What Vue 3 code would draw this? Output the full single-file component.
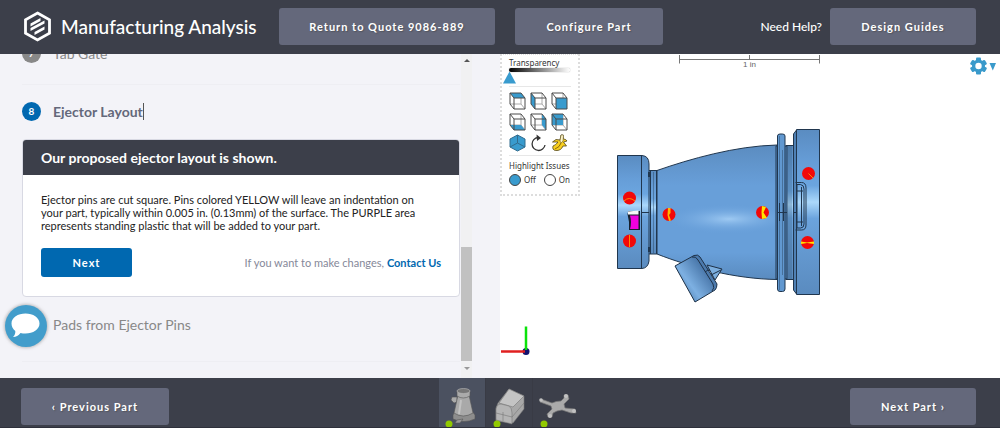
<script setup>
import { ref } from 'vue'

const transparency = ref(0)
const highlight = ref('off')
const activePart = ref('nozzle')

const cubes = [
  { name: 'Top view', face: '1,1 12,1 16,6 5,6' },
  { name: 'Left view', face: '1,1 5,6 5,17 1,12' },
  { name: 'Front view', face: '5,6 16,6 16,17 5,17' },
  { name: 'Bottom view', face: '1,12 12,12 16,17 5,17' },
  { name: 'Right view', face: '12,1 16,6 16,17 12,12' },
  { name: 'Back view', face: '1,1 12,1 12,12 1,12' },
]
</script>

<template>
  <div class="app">
    <header class="topbar">
      <svg class="logo" viewBox="0 0 28 31" aria-hidden="true">
        <path d="M14 2 26 8.700V22.300L14 29 2 22.300V8.700Z" fill="none" stroke="#fff" stroke-width="2.800" />
        <path d="M7 15.500V12.500L17 7V10ZM7 20V17L21 9.500V12.500ZM11 24V21L21 15.500V18.500Z" fill="#fff" />
      </svg>
      <h1>Manufacturing Analysis</h1>
      <button class="btn quote" type="button">Return to Quote 9086-889</button>
      <button class="btn configure" type="button">Configure Part</button>
      <span class="help">Need Help?</span>
      <button class="btn guides" type="button">Design Guides</button>
    </header>

    <main>
      <section class="steps">
        <div class="step-list">
          <div class="step past"><span class="num">7</span><span>Tab Gate</span></div>
          <hr />
          <div class="step current"><span class="num">8</span><span class="name">Ejector Layout</span></div>
          <article class="card">
            <h2>Our proposed ejector layout is shown.</h2>
            <div class="card-body">
              <p>Ejector pins are cut square. Pins colored YELLOW will leave an indentation on your part, typically within 0.005 in. (0.13mm) of the surface. The PURPLE area represents standing plastic that will be added to your part.</p>
              <div class="actions">
                <button class="next" type="button">Next</button>
                <span>If you want to make changes, <a href="#contact">Contact Us</a></span>
              </div>
            </div>
          </article>
          <div class="step upcoming"><span class="num"></span><span>Pads from Ejector Pins</span></div>
          <hr />
        </div>
        <div class="scrollbar" aria-hidden="true">
          <i class="arrow up"></i>
          <div class="thumb"></div>
          <i class="arrow down"></i>
        </div>
        <button class="chat" type="button" aria-label="Chat">
          <svg viewBox="0 0 42 42">
            <path d="M20.500 8.500C28 8.500 34.500 12.500 34.500 18.500S28 28.500 20.500 28.500C18.800 28.500 17 28.300 15.500 27.900C13.500 30.500 11 31.800 8 32C9.800 30.300 10.500 28.500 10.300 26C8 24.200 6.500 21.500 6.500 18.500C6.500 12.500 13 8.500 20.500 8.500Z" fill="#fff" />
          </svg>
        </button>
      </section>

      <section class="viewer">
        <svg class="scene" viewBox="500 54 500 324" preserveAspectRatio="xMidYMin meet">
          <defs>
            <linearGradient id="steel" x1="0" y1="0" x2="0" y2="1">
              <stop offset="0" stop-color="#5a8cc1" />
              <stop offset=".2" stop-color="#669dd7" />
              <stop offset=".34" stop-color="#6ba5df" />
              <stop offset=".44" stop-color="#abd8fb" />
              <stop offset=".54" stop-color="#6ba3dd" />
              <stop offset="1" stop-color="#5a8bbf" />
            </linearGradient>
            <linearGradient id="body" x1="0" y1="0" x2="0" y2="1">
              <stop offset="0" stop-color="#5b8cc0" />
              <stop offset=".3" stop-color="#689fd9" />
              <stop offset=".8" stop-color="#689fd9" />
              <stop offset="1" stop-color="#5a8bbf" />
            </linearGradient>
            <radialGradient id="shine">
              <stop offset="0" stop-color="#a4cef5" stop-opacity=".9" />
              <stop offset="1" stop-color="#68a0dc" stop-opacity="0" />
            </radialGradient>
            <linearGradient id="spout" x1="680" y1="292" x2="706" y2="273" gradientUnits="userSpaceOnUse">
              <stop offset="0" stop-color="#4f80b3" />
              <stop offset=".4" stop-color="#7db0e2" />
              <stop offset="1" stop-color="#4c7aad" />
            </linearGradient>
          </defs>

          <path d="M679.500 55V63.500M819.500 55V63.500M679.500 59.500H819.500M749.500 55V59.500" stroke="#777" fill="none" />
          <text x="743" y="67" class="scale-text">1 in</text>

          <g stroke="#20364e" stroke-width="1">
            <path d="M648 170.500H657V254H648Z" fill="url(#steel)" />
            <path d="M617.500 155.500H642Q649 156 649 164V261Q648 268 642 268.500H617.500Z" fill="url(#steel)" />
            <path d="M657 170.500C690 159 735 146 777 145V279.500C735 279 690 267 657 254Z" fill="url(#body)" />
          </g>
          <ellipse cx="729" cy="219" rx="66" ry="15" fill="url(#shine)" />
          <g stroke="#20364e" stroke-width="1">
            <path d="M786 145.500H795V279.500H786Z" fill="url(#steel)" />
            <path d="M796.500 130 793.500 134V290L796.500 294Z" fill="#4f80b4" />
            <path d="M796.500 129.500H819.500V294.500H796.500Z" fill="url(#steel)" />
            <path d="M776 146H787V279H776Z" fill="#568bc2" />
            <path d="M777.500 136Q777.500 134 780 134H782.500Q785 134 785 136V289Q785 291.500 782.500 291.500H780Q777.500 291.500 777.500 289Z" fill="#6198d0" />
          </g>
          <g fill="none" stroke="#20364e" stroke-width="1">
            <path d="M641.500 156V268M641 212.500H649M650.500 171V254M656.500 171V254" />
            <path d="M653.500 172V253M779.500 136V290M782.500 150V275M789 146V279M791 146V279" stroke-opacity=".4" />
            <path d="M649 172V177M649 247V252" stroke-width="2" />
            <path d="M777 212.500H787M793 212.500H797M779.500 203V221M783.500 203V221" />
            <path d="M795.500 182.500H801.500Q806 182.500 806 188V225Q806 230 801.500 230H795.500M797 184.500H800.500Q804 185 804 189V224Q804 228 800.500 228H797Z" />
            <path d="M796.500 187V226M801.500 187V226M797 191H803M797 222H803" />
          </g>
          <g stroke="#1e3147" stroke-width="1" stroke-linejoin="round">
            <path d="M707 265 722 269 715 280Z" fill="#7caede" />
            <path d="M711 275 721 270" fill="none" />
            <path d="M675 266 694 255.500Q698 254 700 257L717 284Q717 288 715 290L695 302Z" fill="url(#spout)" />
            <path d="M692 257Q696 256 698 260L713 284Q715 288 712 291M705 272 708 270" fill="none" />
          </g>

          <path d="M628.500 211H640V230H629V222L627.500 214Z" fill="#17202d" />
          <path d="M628 211.500 638.500 210.500V214.500H628Z" fill="#f7f7f7" />
          <path d="M630 215.500H638.500V229H630Q632 222 630 215.500Z" fill="#f000dd" />

          <g fill="#f20808">
            <circle cx="629.500" cy="198" r="6.500" />
            <circle cx="629.500" cy="241" r="6.500" />
            <circle cx="669" cy="214.500" r="6.500" />
            <circle cx="762.500" cy="212.500" r="6.500" />
            <circle cx="808.500" cy="173.500" r="6.500" />
            <circle cx="807.500" cy="242.500" r="6.500" />
          </g>
          <path d="M624 201Q629 196 635 201M629.500 235V247M808.500 173.500 813 178" fill="none" stroke="#ff8a00" />
          <path d="M668 208H670.500V213L669 215 671 220.500 669 221 667.500 215Z" fill="#ffb900" />
          <path d="M762 206 766 207 763.500 212.500 767 218 762 219 761.500 212.500Z" fill="#ffe400" />
          <path d="M801 241.500 807 242.500 814 241.500V244L807 243 801 244Z" fill="#ffe400" />

          <circle cx="526" cy="351.500" r="3.500" fill="#11116e" />
          <path d="M501 351.500H525" stroke="#e02020" stroke-width="2.500" />
          <path d="M526 326.500V350" stroke="#0be20b" stroke-width="2.500" />
        </svg>

        <form class="tools" @submit.prevent>
          <label for="transparency">Transparency</label>
          <input id="transparency" v-model="transparency" type="range" min="0" max="100" />
          <div class="views">
            <button v-for="cube in cubes" :key="cube.name" type="button" :aria-label="cube.name">
              <svg viewBox="0 0 17 18">
                <path d="M1 12H12V1M12 12 16 17" fill="none" stroke="#aaa" />
                <polygon :points="cube.face" fill="#399bce" />
                <path d="M1 1H12L16 6V17H5L1 12ZM1 1 5 6H16M5 6V17" fill="none" stroke="#4b4b4b" stroke-width="1" />
              </svg>
            </button>
            <button type="button" aria-label="Isometric view">
              <svg viewBox="0 0 17 18">
                <path d="M8.500 1 16 5V13L8.500 17 1 13V5Z" fill="#399bce" stroke="#326c8e" />
                <path d="M8.500 1V9L1 13M8.500 9 16 13" fill="none" stroke="#326c8e" />
              </svg>
            </button>
            <button type="button" aria-label="Rotate">
              <svg viewBox="0 0 17 18">
                <path d="M8 3.500A6.500 6.500 0 1 0 15 11" fill="none" stroke="#333" stroke-width="1.300" />
                <path d="M6.500 .5 11 4 7 7Z" fill="#333" />
              </svg>
            </button>
            <button type="button" aria-label="Banana for scale">
              <svg viewBox="0 0 17 18">
                <path d="M10 1 12 1 12.500 5Q15 5 16 7L12.500 8 15.500 12 12 12Q10 17 4.500 16.500Q1 16 2 12Q5 11 7 8L1.500 8 5 5.500 9 6Z" fill="#f8cf20" stroke="#51451a" stroke-width=".8" />
                <path d="M10 1H12.500L12 7 10 9 9 7Z" fill="#fff6c8" stroke="#51451a" stroke-width=".5" />
                <path d="M4 15Q9 13 10 9" fill="none" stroke="#8a6a0b" />
              </svg>
            </button>
          </div>
          <fieldset>
            <legend>Highlight Issues</legend>
            <label><input v-model="highlight" type="radio" name="highlight" value="off" />Off</label>
            <label><input v-model="highlight" type="radio" name="highlight" value="on" />On</label>
          </fieldset>
        </form>

        <button class="settings" type="button" aria-label="Viewer settings">
          <svg viewBox="0 0 27 18">
            <g fill="#3a9acb">
              <rect v-for="a in [0, 60, 120]" :key="a" x="6" y="0.500" width="5" height="17" rx="1" :transform="`rotate(${a} 8.500 9)`" />
              <circle cx="8.500" cy="9" r="6.500" />
              <path d="M19.500 6H26L22.800 13.500Z" />
            </g>
            <circle cx="8.500" cy="9" r="3.200" fill="#fff" />
          </svg>
        </button>
      </section>
    </main>

    <footer>
      <button class="btn previous" type="button">‹ Previous Part</button>
      <nav class="parts" aria-label="Parts">
        <button type="button" aria-label="Nozzle" :class="{ active: activePart === 'nozzle' }" @click="activePart = 'nozzle'">
          <svg viewBox="0 0 47 49">
            <g stroke="#555" stroke-width=".6">
              <path d="M14 37 16 33H33L36 37V41Q25 46 14 41Z" fill="#8d8d8d" />
              <path d="M18 19 13 19 12 22 15 25 18 24Z" fill="#aaa" />
              <path d="M19 17 15 35Q24 41 34 35L30 17Z" fill="#a9a9a9" />
              <path d="M18 13V18Q24 22 31 18V13Z" fill="#aaa" />
              <ellipse cx="24.500" cy="13" rx="6.500" ry="2.500" fill="#777" stroke="#bbb" />
              <path d="M18 42 24 41 21 45 16 45Z" fill="#999" />
            </g>
            <path d="M22 22 20 36" stroke="#c2c2c2" stroke-width="2" />
            <circle cx="10" cy="46" r="3.500" fill="#91c900" />
          </svg>
        </button>
        <button type="button" aria-label="Cover" :class="{ active: activePart === 'cover' }" @click="activePart = 'cover'">
          <svg viewBox="0 0 47 49">
            <g stroke="#777" stroke-width=".6">
              <path d="M10 30 12 25 23 11 38 18V31L27 45 10 43Z" fill="#a8a8a8" />
              <path d="M13 25 23 11 38 18 27 29Z" fill="#c4c4c4" />
              <path d="M10 31Q11 26 15 26L23 28Q26 30 26 35V46L10 42Z" fill="#b5b5b5" />
              <path d="M10 35 26 39 38 25M17 34V43" fill="none" />
            </g>
            <circle cx="11" cy="46" r="3.500" fill="#91c900" />
          </svg>
        </button>
        <button type="button" aria-label="Frame" :class="{ active: activePart === 'frame' }" @click="activePart = 'frame'">
          <svg viewBox="0 0 47 49">
            <path d="M8 21 19 25Q23 23 28 23L31 20 31 17 35 17 36 21 31 26 32 30 42 31 43 35 38 35 29 32 24 33 20 35 19 39 15 39 14 36 19 31 18 28 7 24Z" fill="#aaa" stroke="#777" stroke-width=".7" />
            <g fill="#c2c2c2"><circle cx="8" cy="22" r="1.800" /><circle cx="33" cy="18" r="2" /><circle cx="41" cy="33" r="2" /><circle cx="17" cy="38" r="2" /></g>
            <circle cx="11" cy="46" r="3.500" fill="#91c900" />
          </svg>
        </button>
      </nav>
      <button class="btn following" type="button">Next Part ›</button>
    </footer>
  </div>
</template>

<style>
body {
  margin: 0;
}
</style>

<style scoped>
.app {
  display: flex;
  flex-direction: column;
  height: 100vh;
  font-family: "Lato", "Liberation Sans", sans-serif;
  color: #222;
  overflow: hidden;
}
button {
  border: 0;
  padding: 0;
  font: inherit;
  background: none;
  cursor: pointer;
}
svg {
  display: block;
}
.topbar {
  display: flex;
  flex: none;
  align-items: center;
  height: 54px;
  padding: 0 24px 2px 23px;
  box-sizing: border-box;
  background: #3c3f4a;
  color: #fff;
}
.logo {
  width: 29px;
  height: 31px;
  margin-right: 9px;
}
h1 {
  margin: 0;
  width: 218px;
  font-size: 19px;
  font-weight: 500;
  white-space: nowrap;
}
.btn {
  height: 37px;
  border-radius: 3px;
  background: #64687b;
  color: #fff;
  font-size: 11px;
  font-weight: 700;
  letter-spacing: 1px;
  white-space: nowrap;
  text-shadow: 1px 1px 1px #4448;
}
.quote {
  width: 216px;
}
.configure {
  width: 148px;
  margin-left: 20px;
}
.guides {
  width: 146px;
}
.help {
  margin: 0 8px 0 auto;
  font-size: 12px;
  font-weight: 500;
}
main {
  flex: 1;
  min-height: 0;
  display: grid;
  grid-template-columns: minmax(0, 1fr) minmax(0, 1fr);
}
.steps {
  position: relative;
  display: flex;
  min-height: 0;
  padding: 0 28px 0 22px;
  background: #f3f3f8;
}
.step-list {
  flex: 1;
  min-width: 0;
  display: flex;
  flex-direction: column;
  justify-content: flex-end;
  padding-bottom: 16px;
  overflow: hidden;
}
.step-list > * {
  flex: none;
}
.step {
  display: flex;
  align-items: center;
  gap: 12px;
  height: 58px;
  font-size: 14px;
  color: #888;
}
.num {
  width: 19px;
  height: 19px;
  border-radius: 50%;
  background: #888;
  color: #fff;
  font-size: 10px;
  font-weight: 700;
  line-height: 19px;
  text-align: center;
}
.current {
  height: 54px;
  padding-bottom: 2px;
  box-sizing: border-box;
  color: #64687b;
  font-weight: 700;
}
.current .num {
  background: #0068b0;
}
.name {
  border-right: 1px solid #555;
}
.upcoming {
  height: 54px;
  margin-bottom: 8px;
}
hr {
  width: 100%;
  margin: 2px 0 0;
  border: 0;
  border-top: 1px solid #eeeef3;
}
.card {
  box-sizing: border-box;
  border: 1px solid #d8d9e3;
  border-radius: 4px;
  background: #fff;
  overflow: hidden;
}
h2 {
  margin: 0;
  padding: 0 18px;
  background: #3c3f4a;
  color: #fff;
  font-size: 14px;
  font-weight: 700;
  line-height: 35px;
}
.card-body {
  padding: 18px 18px 19px;
}
p {
  margin: 0;
  padding-right: 12px;
  font-size: 11px;
  line-height: 13px;
}
.actions {
  display: flex;
  align-items: center;
  justify-content: space-between;
  margin-top: 16px;
  color: #858899;
  font-size: 11px;
}
.next {
  width: 91px;
  height: 29px;
  border-radius: 3px;
  background: #0068b0;
  color: #fff;
  font-weight: 700;
  letter-spacing: 1px;
}
a {
  color: #0068b0;
  font-weight: 700;
  text-decoration: none;
}
.scrollbar {
  display: flex;
  flex-direction: column;
  align-items: center;
  width: 11px;
  margin-left: 1px;
  padding: 5px 0 8px;
  background: #f1f1f2;
}
.thumb {
  width: 11px;
  height: 114px;
  margin: auto 0 6px;
  background: #c1c1c1;
}
.arrow {
  border: 3px solid transparent;
}
.up {
  border-top: 0;
  border-bottom-color: #555;
}
.down {
  border-bottom: 0;
  border-top-color: #999;
}
.chat {
  position: absolute;
  left: 5px;
  bottom: 31px;
  width: 42px;
  height: 42px;
  border-radius: 50%;
  background: #429dcb;
  box-shadow: 0 0 3px 1px #8888;
}
.viewer {
  position: relative;
  min-height: 0;
  background: #fff;
}
.scene {
  width: 100%;
  height: 100%;
}
.scale-text {
  font: 8px "Liberation Sans", sans-serif;
  fill: #666;
}
.tools {
  position: absolute;
  top: 0;
  left: 0;
  box-sizing: border-box;
  width: 80px;
  padding: 2px 7px 8px;
  border: 2px dotted #ddd;
  border-top-width: 1px;
  background: #fff;
  font: 8px/12px "Noto Sans", sans-serif;
  color: #333;
}
.tools > label {
  display: block;
}
input[type="range"] {
  display: block;
  appearance: none;
  width: 61px;
  height: 4px;
  margin: -1px 0 14px;
  border-radius: 2px;
  background: linear-gradient(90deg, #000, #fff);
  box-shadow: 0 0 1px #777;
}
input[type="range"]::-webkit-slider-thumb {
  appearance: none;
  width: 13px;
  height: 12px;
  margin: 15px 0 0 -6px;
  background: #399bce;
  clip-path: polygon(50% 0, 100% 100%, 0 100%);
}
.views {
  display: grid;
  grid-template-columns: repeat(3, 17px);
  gap: 3px 4px;
  padding: 5px 0 3px;
  border: 1px solid #e7e7e7;
  border-width: 1px 0;
}
.views svg {
  width: 17px;
  height: 18px;
}
fieldset {
  display: flex;
  gap: 8px;
  margin: 0;
  padding: 0;
  border: 0;
}
legend {
  padding: 4px 0 2px;
  white-space: nowrap;
}
fieldset label {
  display: flex;
  align-items: center;
  gap: 3px;
}
input[type="radio"] {
  appearance: none;
  box-sizing: border-box;
  width: 12px;
  height: 12px;
  margin: 0;
  border: 1px solid #444;
  border-radius: 50%;
  background: #fff;
}
input[type="radio"]:checked {
  background: #399bce;
}
.settings {
  position: absolute;
  top: 3px;
  right: 3px;
}
.settings svg {
  width: 27px;
  height: 18px;
}
footer {
  display: grid;
  flex: none;
  grid-template-columns: 1fr auto 1fr;
  align-items: center;
  height: 50px;
  padding: 0 24px 0 21px;
  box-sizing: border-box;
  border-bottom: 1px solid #2e303b;
  background: #3c3f4a;
}
.previous {
  width: 148px;
  margin-top: 7px;
}
.parts {
  display: flex;
  margin-left: 22px;
}
.parts button {
  width: 47px;
  height: 49px;
  border-right: 1px solid #393b45;
}
.parts button:last-child {
  border-right: 0;
}
.parts .active {
  background: #4b5160;
}
.parts svg {
  width: 47px;
  height: 49px;
}
.following {
  width: 126px;
  margin-top: 7px;
  justify-self: end;
}
</style>
